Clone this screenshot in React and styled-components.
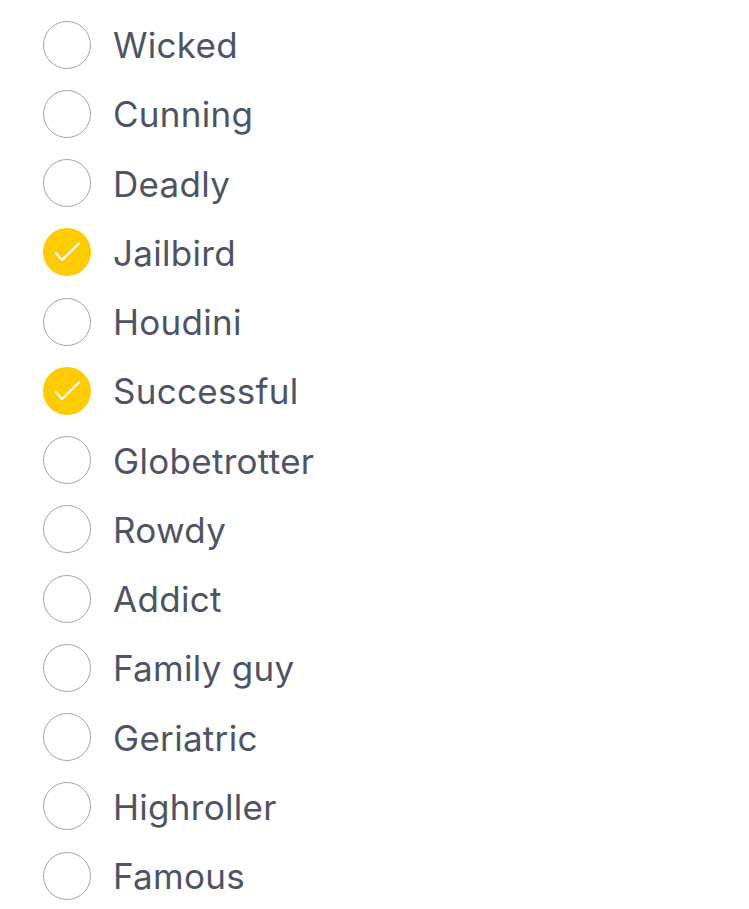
import React from "react";
import styled, { createGlobalStyle } from "styled-components";

const Global = createGlobalStyle`
  html, body { margin: 0; padding: 0; background: #ffffff; }
  body { font-family: Inter, "Noto Sans", sans-serif; }
`;

const List = styled.ul`
  list-style: none;
  margin: 0;
  padding: 10px 0 0 43px;
  display: flex;
  flex-direction: column;
`;

const Row = styled.li`
  height: 69.25px;
  display: flex;
  align-items: center;
  gap: 22px;
`;

const Circle = styled.span`
  box-sizing: border-box;
  width: 48px;
  height: 48px;
  border-radius: 50%;
  flex: none;
  display: flex;
  align-items: center;
  justify-content: center;
  background: ${(p) => (p.$checked ? "#fdcb00" : "#ffffff")};
  border: ${(p) => (p.$checked ? "none" : "1.5px solid #a3a3aa")};
`;

const Label = styled.span`
  font-size: 35px;
  color: #4f5465;
  letter-spacing: 0.3px;
  line-height: 1;
  padding-top: 2px;
`;

const items = [
  ["Wicked", false],
  ["Cunning", false],
  ["Deadly", false],
  ["Jailbird", true],
  ["Houdini", false],
  ["Successful", true],
  ["Globetrotter", false],
  ["Rowdy", false],
  ["Addict", false],
  ["Family guy", false],
  ["Geriatric", false],
  ["Highroller", false],
  ["Famous", false],
];

const Check = () => (
  <svg width="48" height="48" viewBox="0 0 48 48" fill="none">
    <path d="M13 25 L19 32 L36 15.5" stroke="#ffffff" strokeWidth="2.2" strokeLinecap="round" strokeLinejoin="round" />
  </svg>
);

export default function App() {
  return (
    <>
      <Global />
      <List>
        {items.map(([name, checked]) => (
          <Row key={name}>
            <Circle $checked={checked}>{checked && <Check />}</Circle>
            <Label>{name}</Label>
          </Row>
        ))}
      </List>
    </>
  );
}
